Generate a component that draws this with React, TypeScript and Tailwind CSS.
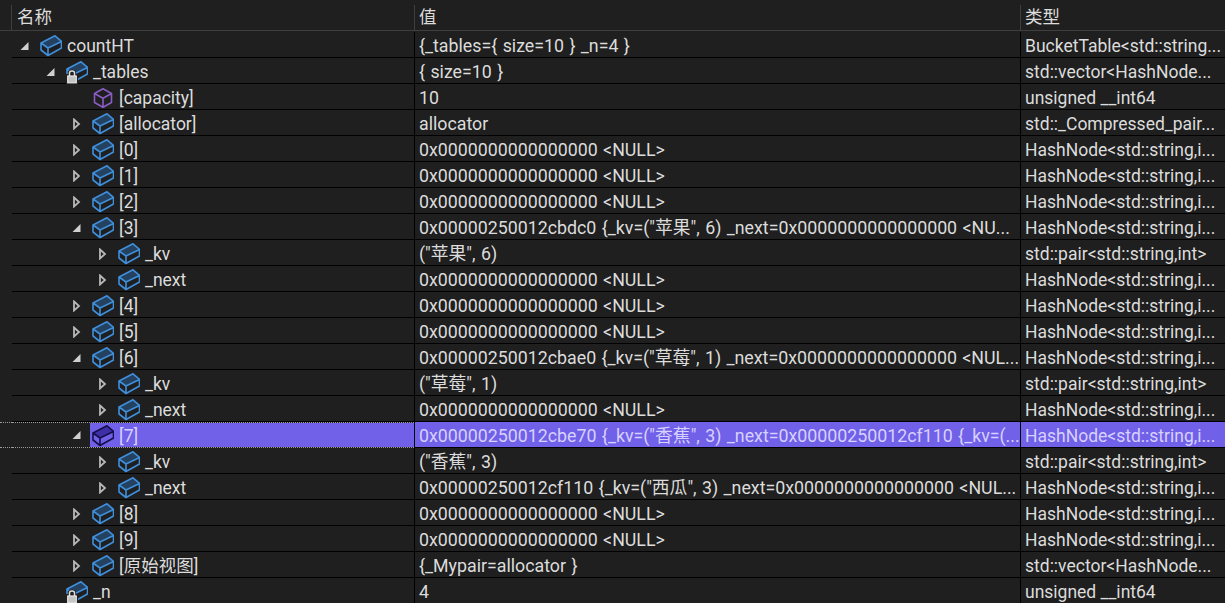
const FONT = "font-['Roboto','Noto_Sans_CJK_SC',sans-serif]"

type IconKind = 'box' | 'lock' | 'cube' | 'selected'
type Arrow = 'open' | 'closed' | null

interface Row {
  level: number
  arrow: Arrow
  icon: IconKind
  name: string
  value: string
  type: string
  selected?: boolean
}

const NULLPTR = '0x0000000000000000 <NULL>'
const NODE = 'HashNode<std::string,i...'
const PAIR = 'std::pair<std::string,int>'

const rows: Row[] = [
  { level: 0, arrow: 'open', icon: 'box', name: 'countHT', value: '{_tables={ size=10 } _n=4 }', type: 'BucketTable<std::string...' },
  { level: 1, arrow: 'open', icon: 'lock', name: '_tables', value: '{ size=10 }', type: 'std::vector<HashNode...' },
  { level: 2, arrow: null, icon: 'cube', name: '[capacity]', value: '10', type: 'unsigned __int64' },
  { level: 2, arrow: 'closed', icon: 'box', name: '[allocator]', value: 'allocator', type: 'std::_Compressed_pair...' },
  { level: 2, arrow: 'closed', icon: 'box', name: '[0]', value: NULLPTR, type: NODE },
  { level: 2, arrow: 'closed', icon: 'box', name: '[1]', value: NULLPTR, type: NODE },
  { level: 2, arrow: 'closed', icon: 'box', name: '[2]', value: NULLPTR, type: NODE },
  { level: 2, arrow: 'open', icon: 'box', name: '[3]', value: '0x00000250012cbdc0 {_kv=("苹果", 6) _next=0x0000000000000000 <NU...', type: NODE },
  { level: 3, arrow: 'closed', icon: 'box', name: '_kv', value: '("苹果", 6)', type: PAIR },
  { level: 3, arrow: 'closed', icon: 'box', name: '_next', value: NULLPTR, type: NODE },
  { level: 2, arrow: 'closed', icon: 'box', name: '[4]', value: NULLPTR, type: NODE },
  { level: 2, arrow: 'closed', icon: 'box', name: '[5]', value: NULLPTR, type: NODE },
  { level: 2, arrow: 'open', icon: 'box', name: '[6]', value: '0x00000250012cbae0 {_kv=("草莓", 1) _next=0x0000000000000000 <NUL...', type: NODE },
  { level: 3, arrow: 'closed', icon: 'box', name: '_kv', value: '("草莓", 1)', type: PAIR },
  { level: 3, arrow: 'closed', icon: 'box', name: '_next', value: NULLPTR, type: NODE },
  { level: 2, arrow: 'open', icon: 'selected', name: '[7]', value: '0x00000250012cbe70 {_kv=("香蕉", 3) _next=0x00000250012cf110 {_kv=(...', type: NODE, selected: true },
  { level: 3, arrow: 'closed', icon: 'box', name: '_kv', value: '("香蕉", 3)', type: PAIR },
  { level: 3, arrow: 'closed', icon: 'box', name: '_next', value: '0x00000250012cf110 {_kv=("西瓜", 3) _next=0x0000000000000000 <NUL...', type: NODE },
  { level: 2, arrow: 'closed', icon: 'box', name: '[8]', value: NULLPTR, type: NODE },
  { level: 2, arrow: 'closed', icon: 'box', name: '[9]', value: NULLPTR, type: NODE },
  { level: 2, arrow: 'closed', icon: 'box', name: '[原始视图]', value: '{_Mypair=allocator }', type: 'std::vector<HashNode...' },
  { level: 1, arrow: null, icon: 'lock', name: '_n', value: '4', type: 'unsigned __int64' },
]

function ArrowIcon({ kind }: { kind: Arrow }) {
  return (
    <svg width="10" height="12" viewBox="0 0 10 12" className="shrink-0">
      {kind === 'open' && <path d="M8.5 2 V10 H0.5 Z" fill="#d0d0d0" />}
      {kind === 'closed' && <path d="M2 1.5 L7 6 L2 10.5 Z" fill="none" stroke="#b8b8b8" strokeWidth="1.8" />}
    </svg>
  )
}

function BoxIcon({ dark }: { dark?: boolean }) {
  const stroke = dark ? '#15104a' : '#3f8fdc'
  const top = dark ? '#3d2fa8' : '#24415f'
  return (
    <svg width="22" height="22" viewBox="0 0 22 22" className="block">
      <path d="M1 8 L15 .8 L21.5 6.5 L8 13 Z" fill={top} />
      <path
        d="M1 8 L15 .8 L21.5 6.5 V13 L8 20.5 L1 15 Z M1 8 L8 13 L21.5 6.5 M8 13 V20.5"
        fill="none"
        stroke={stroke}
        strokeWidth="1.6"
        strokeLinejoin="round"
      />
    </svg>
  )
}

function LockedBox() {
  return (
    <span className="relative block h-[22px] w-[22px]">
      <BoxIcon />
      <svg width="12" height="15" viewBox="0 0 12 15" className="absolute -bottom-[1px] left-0">
        <path d="M0 5 H12 V15 H0 Z M2 5 V3 C2 0 10 0 10 3 V5" fill="#1f1f1f" />
        <path d="M3.5 7 V4 C3.5 1.2 8.5 1.2 8.5 4 V7" fill="none" stroke="#e0e0e0" strokeWidth="1.5" />
        <rect x="1.7" y="7" width="8.6" height="6.8" fill="#c4c4c4" stroke="#e6e6e6" strokeWidth="1.2" />
      </svg>
    </span>
  )
}

function CubeIcon() {
  return (
    <svg width="22" height="22" viewBox="0 0 22 22" className="block">
      <path
        d="M11 1.8 L19.5 6.5 V15.5 L11 20.2 L2.5 15.5 V6.5 Z M2.5 6.5 L11 11.2 L19.5 6.5 M11 11.2 V20.2"
        fill="none"
        stroke="#8a5cc4"
        strokeWidth="1.6"
        strokeLinejoin="round"
      />
    </svg>
  )
}

function RowIcon({ kind }: { kind: IconKind }) {
  if (kind === 'lock') return <LockedBox />
  if (kind === 'cube') return <CubeIcon />
  return <BoxIcon dark={kind === 'selected'} />
}

function TreeRow({ row }: { row: Row }) {
  const sel = row.selected
  const nameIndent = [8, 34, 60, 86][row.level]

  return (
    <div className={`flex h-[26px] ${sel ? 'text-[#d6d1ff]' : 'text-[#dcdcdc]'}`}>
      <div className={`w-3 shrink-0 ${sel ? 'border-y border-dotted border-[#9a9a9a]' : ''}`} />
      <div className={`flex w-[402px] shrink-0 items-center border-b ${sel ? 'border-t border-dotted border-[#9a9a9a]' : 'border-black pt-[2px]'}`}>
        <div className="flex shrink-0 items-center" style={{ paddingLeft: nameIndent }}>
          <ArrowIcon kind={row.arrow} />
        </div>
        <div className={`ml-2 flex h-full flex-1 items-center pl-[2px] ${sel ? 'bg-[#7160e8] pt-[1px]' : ''}`}>
          <RowIcon kind={row.icon} />
          <span className="ml-[5px] whitespace-pre">{row.name}</span>
        </div>
      </div>
      <div className={`flex w-[606px] shrink-0 items-center overflow-hidden border-b border-l border-black pl-1 pt-[2px] text-[17.8px] [word-spacing:1px] ${sel ? 'bg-[#7160e8]' : ''}`}>
        <span className="whitespace-pre">{row.value}</span>
      </div>
      <div className={`flex flex-1 items-center overflow-hidden border-b border-l border-black pl-1 pt-[2px] ${sel ? 'bg-[#7160e8]' : ''}`}>
        <span className="whitespace-pre">{row.type}</span>
      </div>
    </div>
  )
}

export default function App() {
  return (
    <div className={`h-[603px] w-[1225px] overflow-hidden bg-[#1f1f1f] text-[17.5px] leading-[24px] ${FONT}`}>
      <div className="mb-px flex h-[31px] border-b border-[#3f3f3f] pt-[5px] text-[#dcdcdc]">
        <div className="w-[11px] shrink-0" />
        <div className="w-[403px] shrink-0 border-l border-[#3f3f3f] pl-[5px]">名称</div>
        <div className="w-[606px] shrink-0 border-l border-[#3f3f3f] pl-1">值</div>
        <div className="flex-1 border-l border-[#3f3f3f] pl-1">类型</div>
      </div>
      {rows.map((row, i) => (
        <TreeRow key={i} row={row} />
      ))}
    </div>
  )
}
